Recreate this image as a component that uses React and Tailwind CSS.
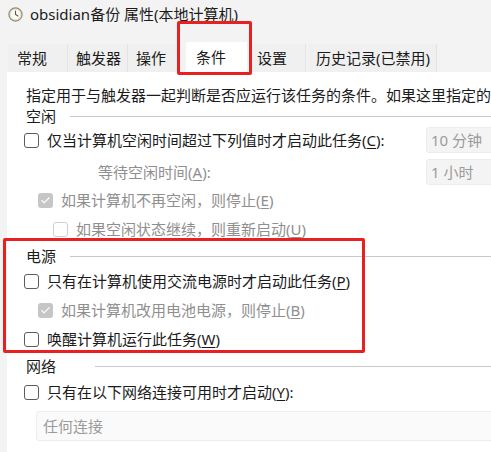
import { Check } from 'lucide-react'

const font = { fontFamily: '"Noto Sans", "Noto Sans CJK SC", sans-serif' }

// 访问键带下划线
function Key({ k }) {
  return <>(<span className="underline underline-offset-2">{k}</span>)</>
}

function Box({ checked, disabled }) {
  if (checked) {
    return (
      <span className="w-[15px] h-[15px] rounded-[3px] bg-[#c6c6c6] grid place-items-center shrink-0">
        <Check size={11} strokeWidth={2.5} className="text-white" />
      </span>
    )
  }
  return (
    <span className={`w-[15px] h-[15px] rounded-[3px] border bg-white shrink-0 ${disabled ? 'border-[#cfcfcf]' : 'border-[#5c5c5c]'}`} />
  )
}

function Row({ h, pl, children, disabled, box }) {
  return (
    <div className={`flex items-center gap-[8px] whitespace-nowrap ${disabled ? 'text-[#8f8f8f]' : 'text-[#1b1b1b]'}`} style={{ height: h, paddingLeft: pl }}>
      {box}
      <span>{children}</span>
    </div>
  )
}

function Section({ title, h, line }) {
  return (
    <div className="flex items-center pl-[19px] text-[#1b1b1b]" style={{ height: h }}>
      <span>{title}</span>
      <div className="h-px bg-[#c9c9c9] flex-1 mr-[-10px]" style={{ marginLeft: line }} />
    </div>
  )
}

function Drop({ text, h = 26 }) {
  return (
    <div className="w-[90px] bg-[#f4f4f4] border border-[#ececec] rounded-[3px] flex items-center pl-[4px] text-[#9b9b9b]" style={{ height: h }}>
      {text}
    </div>
  )
}

function Tab({ label, w, pl }) {
  return (
    <div className="h-[28px] bg-[#f0f0f0] border-r border-[#e3e3e3] flex items-center whitespace-nowrap text-[#1b1b1b]" style={{ width: w, paddingLeft: pl }}>
      {label}
    </div>
  )
}

export default function App() {
  return (
    <div className="relative w-[491px] h-[452px] bg-[#f3f3f3] overflow-hidden text-[15px] leading-none" style={font}>
      {/* 标题栏 */}
      <div className="h-[28px] flex items-center pl-[8px] gap-[7px] text-[#1b1b1b]">
        <svg width="15" height="15" viewBox="0 0 15 15">
          <circle cx="7.5" cy="7.5" r="6.6" fill="#efe2ad" stroke="#8c8c8c" strokeWidth="1.2" />
          <circle cx="7.5" cy="7.5" r="4.8" fill="#fbfbfb" />
          <path d="M7.5 4 V7.5 L10 9" stroke="#555" strokeWidth="1.1" fill="none" strokeLinecap="round" />
        </svg>
        <span className="text-[15px]">obsidian备份 属性(本地计算机)</span>
      </div>

      {/* 选项卡 */}
      <div className="h-[44px] flex items-end pl-[8px]">
        <Tab label="常规" w={60} pl={9} />
        <Tab label="触发器" w={60} pl={8} />
        <Tab label="操作" w={50} pl={8} />
        <div className="w-[8px]" />
        <div className="h-[31px] w-[61px] bg-white flex items-center pl-[10px] text-[#1b1b1b] -mb-px relative z-10">条件</div>
        <div className="w-[3px]" />
        <Tab label="设置" w={56} pl={7} />
        <div className="w-[2px]" />
        <Tab label="历史记录(已禁用)" w={129} pl={8} />
      </div>

      {/* 内容面板 */}
      <div className="ml-[7px] h-[380px] bg-white flex flex-col">
        <div className="h-[12px]" />
        <div className="h-[22px] flex items-center pl-[19px] whitespace-nowrap text-[#1b1b1b]">
          指定用于与触发器一起判断是否应运行该任务的条件。如果这里指定的
        </div>
        <Section title="空闲" h={21} line={14} />
        <div className="h-[26px] flex items-center justify-between">
          <Row h={26} pl={17} box={<Box />}>仅当计算机空闲时间超过下列值时才启动此任务<Key k="C" />:</Row>
          <div className="mr-[-25px]"><Drop text="10 分钟" /></div>
        </div>
        <div className="h-[6px]" />
        <div className="h-[26px] flex items-center justify-between">
          <Row h={26} pl={91} disabled>等待空闲时间<Key k="A" />:</Row>
          <div className="mr-[-25px]"><Drop text="1 小时" /></div>
        </div>
        <Row h={30} pl={31} disabled box={<Box checked />}>如果计算机不再空闲，则停止<Key k="E" /></Row>
        <Row h={28} pl={46} disabled box={<Box disabled />}>如果空闲状态继续，则重新启动<Key k="U" /></Row>
        <Section title="电源" h={26} line={14} />
        <Row h={24} pl={17} box={<Box />}>只有在计算机使用交流电源时才启动此任务<Key k="P" /></Row>
        <Row h={34} pl={31} disabled box={<Box checked />}>如果计算机改用电池电源，则停止<Key k="B" /></Row>
        <Row h={24} pl={17} box={<Box />}>唤醒计算机运行此任务<Key k="W" /></Row>
        <Section title="网络" h={30} line={39} />
        <Row h={22} pl={17} box={<Box />}>只有在以下网络连接可用时才启动<Key k="Y" />:</Row>
        <div className="h-[8px]" />
        <div className="ml-[29px] mr-[-10px] h-[30px] bg-[#fafafa] border border-[#ededed] rounded-[3px] flex items-center pl-[6px] text-[#9b9b9b]">
          任何连接
        </div>
      </div>

      {/* 红色标注框 */}
      <div className="absolute left-[177px] top-[21px] w-[75px] h-[54px] border-[3px] border-[#e8201f] rounded-[2px] z-20" />
      <div className="absolute left-[3px] top-[238px] w-[362px] h-[115px] border-[3px] border-[#e8201f] rounded-[2px] z-20" />
    </div>
  )
}
